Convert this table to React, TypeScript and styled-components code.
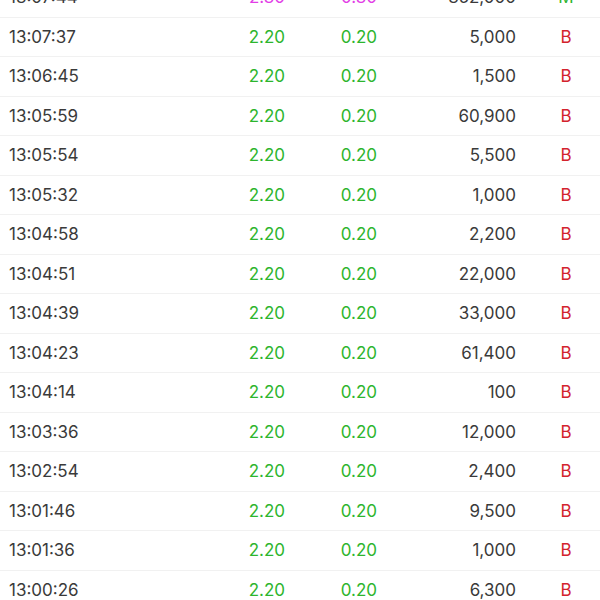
import styled, { createGlobalStyle } from "styled-components";

const GlobalStyle = createGlobalStyle`
  html, body {
    margin: 0;
    padding: 0;
    background: #ffffff;
    overflow: hidden;
  }
`;

const List = styled.div`
  margin-top: -22px;
  font-family: Inter, "Liberation Sans", sans-serif;
  font-size: 17px;
  color: #3a3a3a;
`;

const Row = styled.div`
  display: grid;
  grid-template-columns: 200px 76px 92px 139px 80px;
  align-items: center;
  box-sizing: border-box;
  height: 39.5px;
  padding-left: 9px;
  border-bottom: 1px solid #f1f1f1;
`;

const Time = styled.span`
  color: #3a3a3a;
`;

const Num = styled.span<{ $tone?: "up" | "limit" }>`
  text-align: right;
  color: ${(p) =>
    p.$tone === "limit" ? "#e23ee6" : p.$tone === "up" ? "#2db52d" : "#3a3a3a"};
`;

const Flag = styled.span<{ $side: "B" | "M" }>`
  padding-left: 20px;
  text-align: center;
  color: ${(p) => (p.$side === "M" ? "#2db52d" : "#d3232d")};
`;

interface Trade {
  time: string;
  price: string;
  change: string;
  volume: string;
  side: "B" | "M";
}

const trades: Trade[] = [
  { time: "13:07:44", price: "2.30", change: "0.30", volume: "352,000", side: "M" },
  { time: "13:07:37", price: "2.20", change: "0.20", volume: "5,000", side: "B" },
  { time: "13:06:45", price: "2.20", change: "0.20", volume: "1,500", side: "B" },
  { time: "13:05:59", price: "2.20", change: "0.20", volume: "60,900", side: "B" },
  { time: "13:05:54", price: "2.20", change: "0.20", volume: "5,500", side: "B" },
  { time: "13:05:32", price: "2.20", change: "0.20", volume: "1,000", side: "B" },
  { time: "13:04:58", price: "2.20", change: "0.20", volume: "2,200", side: "B" },
  { time: "13:04:51", price: "2.20", change: "0.20", volume: "22,000", side: "B" },
  { time: "13:04:39", price: "2.20", change: "0.20", volume: "33,000", side: "B" },
  { time: "13:04:23", price: "2.20", change: "0.20", volume: "61,400", side: "B" },
  { time: "13:04:14", price: "2.20", change: "0.20", volume: "100", side: "B" },
  { time: "13:03:36", price: "2.20", change: "0.20", volume: "12,000", side: "B" },
  { time: "13:02:54", price: "2.20", change: "0.20", volume: "2,400", side: "B" },
  { time: "13:01:46", price: "2.20", change: "0.20", volume: "9,500", side: "B" },
  { time: "13:01:36", price: "2.20", change: "0.20", volume: "1,000", side: "B" },
  { time: "13:00:26", price: "2.20", change: "0.20", volume: "6,300", side: "B" },
];

const App = () => {
  return (
    <>
      <GlobalStyle />
      <List>
        {trades.map((t, i) => {
          const tone = t.price === "2.30" ? "limit" : "up";
          return (
            <Row key={i}>
              <Time>{t.time}</Time>
              <Num $tone={tone}>{t.price}</Num>
              <Num $tone={tone}>{t.change}</Num>
              <Num>{t.volume}</Num>
              <Flag $side={t.side}>{t.side}</Flag>
            </Row>
          );
        })}
      </List>
    </>
  );
};

export default App;
